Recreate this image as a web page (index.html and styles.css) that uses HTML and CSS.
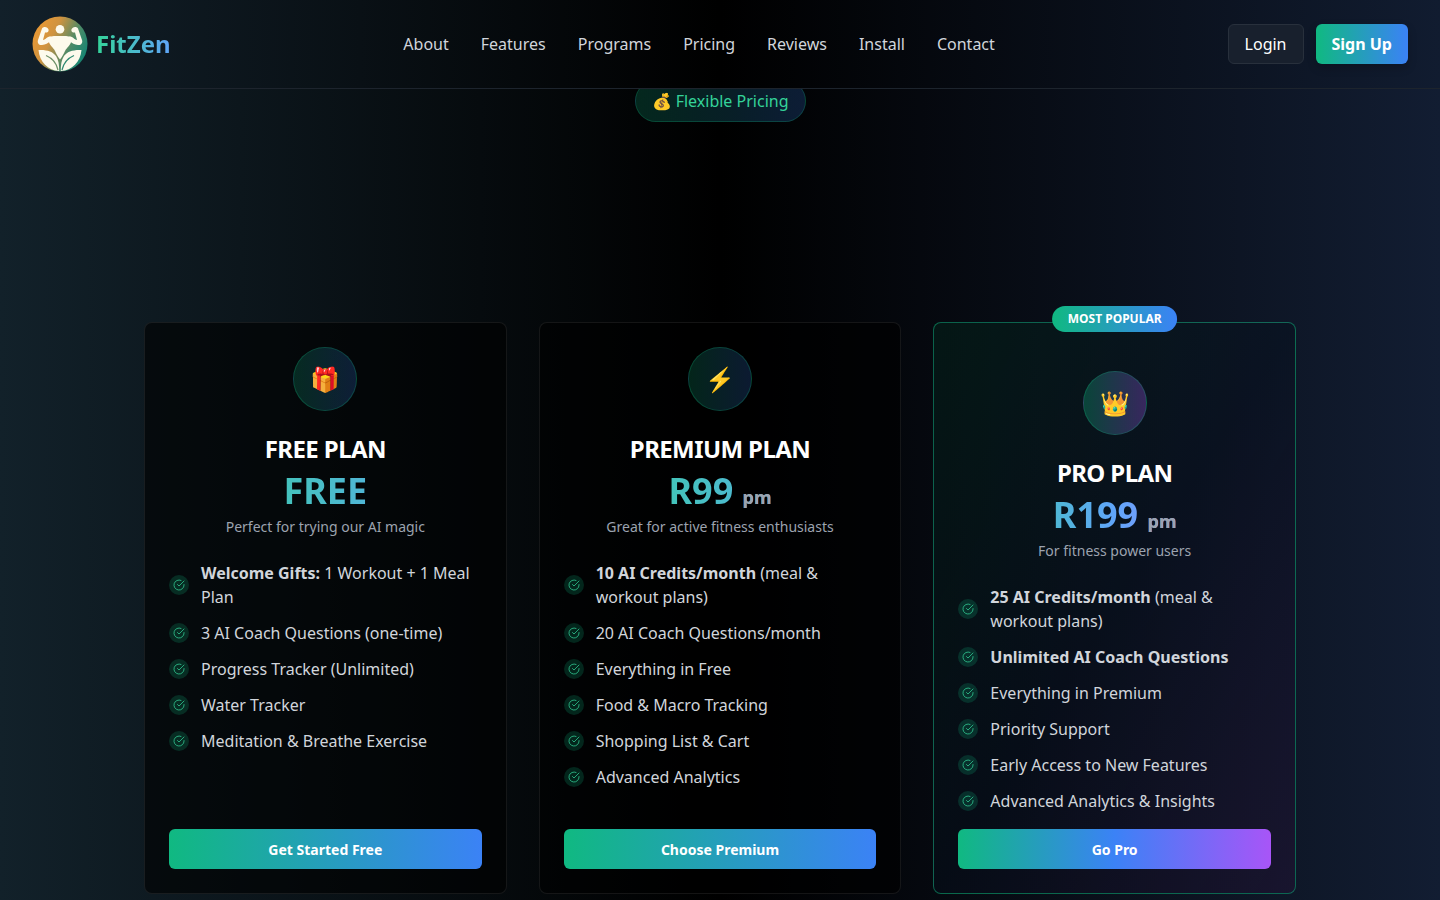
FILE: index.html
```
<!DOCTYPE html>
<html lang="en">
<head>
  <meta charset="UTF-8">
  <meta name="viewport" content="width=device-width, initial-scale=1">
  <title>FitZen - Pricing</title>
  <link rel="stylesheet" href="styles.css">
</head>
<body>
  <!-- shared icon -->
  <svg width="0" height="0" class="sprite" aria-hidden="true">
    <symbol id="check" viewBox="0 0 24 24">
      <path d="M22 11.08V12a10 10 0 1 1-5.93-9.14"/>
      <path d="m9 11 3 3L22 4"/>
    </symbol>
  </svg>

  <header class="header">
    <a href="#" class="brand">
      <svg class="logo" viewBox="0 0 56 56" aria-hidden="true">
        <defs>
          <linearGradient id="logoBg" x1="0" y1="0.2" x2="1" y2="0.7">
            <stop offset="0" stop-color="#ee9a32"/>
            <stop offset="0.35" stop-color="#cf9340"/>
            <stop offset="0.7" stop-color="#4a8a68"/>
            <stop offset="1" stop-color="#128574"/>
          </linearGradient>
        </defs>
        <circle cx="28" cy="28" r="27.5" fill="url(#logoBg)"/>
        <g fill="#fdfaec">
          <circle cx="28" cy="13.2" r="4.300"/>
          <!-- arms -->
          <path d="M15.500 12c-1.500-1.500-4.500-1.500-5.500.5L6 24c-1 3 1 5.500 4 5 3.500-.5 6-1.500 8.500-4.500l2-3-2.500-1c-3 0-4 3-7 3.500l2-7.500c1.500.3 3-.2 3.500-1.500.3-1.200 0-2.200-1-3z"/>
          <path d="M40.500 12c1.500-1.500 4.500-1.500 5.500.5L50 24c1 3-1 5.500-4 5-3.500-.5-6-1.500-8.500-4.500l-2-3 2.500-1c3 0 4 3 7 3.500l-2-7.500c-1.500.3-3-.2-3.500-1.500-.3-1.200 0-2.200 1-3z"/>
          <!-- torso -->
          <path d="M17.500 20.800c3-1 6-1 7.500-.8h6c1.500-.2 4.500-.2 7.500.8l1 3.700c-1 5-4.500 6.500-6.500 10.500-1.200 2.500-2.500 5.500-5 8.500-2.500-3-3.800-6-5-8.500-2-4-5.500-5.500-6.500-10.500z"/>
          <!-- leaves -->
          <path d="M6.500 34c8-.5 14.500 1.500 17.500 6 2.700 4 3.200 9 3.200 15C16 54.500 7.500 46 6.500 34z"/>
          <path d="M49.500 34c-8-.5-14.500 1.500-17.500 6-2.700 4-3.200 9-3.200 15C40 54.500 48.500 46 49.500 34z"/>
        </g>
        <g fill="none" stroke="#6d9068" stroke-width="1.200">
          <path d="M14 39.500c6 2.500 10.500 7.500 12 14.500"/>
          <path d="M42 39.500c-6 2.500-10.500 7.500-12 14.500" stroke="#2f8a72"/>
        </g>
      </svg>
      <span class="brand-name">FitZen</span>
    </a>
    <nav class="nav">
      <a href="#about">About</a>
      <a href="#features">Features</a>
      <a href="#programs">Programs</a>
      <a href="#pricing">Pricing</a>
      <a href="#reviews">Reviews</a>
      <a href="#install">Install</a>
      <a href="#contact">Contact</a>
    </nav>
    <div class="actions">
      <button class="btn-login">Login</button>
      <button class="btn-signup">Sign Up</button>
    </div>
  </header>

  <main class="pricing" id="pricing">
    <div class="intro">
      <span class="pill">💰 Flexible Pricing</span>
    </div>

    <div class="plans">
      <section class="card">
        <div class="icon">🎁</div>
        <h2>FREE PLAN</h2>
        <p class="price">FREE</p>
        <p class="desc">Perfect for trying our AI magic</p>
        <ul>
          <li><span class="tick"><svg><use href="#check"/></svg></span><span><b>Welcome Gifts:</b> 1 Workout + 1 Meal Plan</span></li>
          <li><span class="tick"><svg><use href="#check"/></svg></span><span>3 AI Coach Questions (one-time)</span></li>
          <li><span class="tick"><svg><use href="#check"/></svg></span><span>Progress Tracker (Unlimited)</span></li>
          <li><span class="tick"><svg><use href="#check"/></svg></span><span>Water Tracker</span></li>
          <li><span class="tick"><svg><use href="#check"/></svg></span><span>Meditation &amp; Breathe Exercise</span></li>
        </ul>
        <button class="btn-plan">Get Started Free</button>
      </section>

      <section class="card">
        <div class="icon">⚡</div>
        <h2>PREMIUM PLAN</h2>
        <p class="price">R99 <span class="per">pm</span></p>
        <p class="desc">Great for active fitness enthusiasts</p>
        <ul>
          <li><span class="tick"><svg><use href="#check"/></svg></span><span><b>10 AI Credits/month</b> (meal &amp; workout plans)</span></li>
          <li><span class="tick"><svg><use href="#check"/></svg></span><span>20 AI Coach Questions/month</span></li>
          <li><span class="tick"><svg><use href="#check"/></svg></span><span>Everything in Free</span></li>
          <li><span class="tick"><svg><use href="#check"/></svg></span><span>Food &amp; Macro Tracking</span></li>
          <li><span class="tick"><svg><use href="#check"/></svg></span><span>Shopping List &amp; Cart</span></li>
          <li><span class="tick"><svg><use href="#check"/></svg></span><span>Advanced Analytics</span></li>
        </ul>
        <button class="btn-plan">Choose Premium</button>
      </section>

      <section class="card pro">
        <span class="badge">MOST POPULAR</span>
        <div class="icon">👑</div>
        <h2>PRO PLAN</h2>
        <p class="price">R199 <span class="per">pm</span></p>
        <p class="desc">For fitness power users</p>
        <ul>
          <li><span class="tick"><svg><use href="#check"/></svg></span><span><b>25 AI Credits/month</b> (meal &amp; workout plans)</span></li>
          <li><span class="tick"><svg><use href="#check"/></svg></span><span><b>Unlimited AI Coach Questions</b></span></li>
          <li><span class="tick"><svg><use href="#check"/></svg></span><span>Everything in Premium</span></li>
          <li><span class="tick"><svg><use href="#check"/></svg></span><span>Priority Support</span></li>
          <li><span class="tick"><svg><use href="#check"/></svg></span><span>Early Access to New Features</span></li>
          <li><span class="tick"><svg><use href="#check"/></svg></span><span>Advanced Analytics &amp; Insights</span></li>
        </ul>
        <button class="btn-plan">Go Pro</button>
      </section>
    </div>
  </main>
</body>
</html>
```
FILE: styles.css
```
* {
  box-sizing: border-box;
  margin: 0;
  padding: 0;
}

body {
  min-height: 100vh;
  font-family: "Noto Sans", sans-serif;
  font-size: 16px;
  line-height: 24px;
  color: #d1d5db;
  background: linear-gradient(to right, #12212a, #000 50%, #121d32);
}

button {
  font-family: inherit;
  border: none;
  border-radius: 6px;
  color: #fff;
  cursor: pointer;
}

.sprite {
  position: absolute;
}

/* header */
.header {
  position: sticky;
  top: 0;
  z-index: 10;
  display: flex;
  justify-content: space-between;
  align-items: center;
  padding: 16px 32px;
  background: linear-gradient(to right, #12202a, #000 50%, #111c30);
  border-bottom: 1px solid #1d242d;
}

.brand {
  display: flex;
  align-items: center;
  gap: 8px;
  text-decoration: none;
}

.logo {
  width: 56px;
  height: 56px;
}

.brand-name {
  font-size: 24px;
  line-height: 32px;
  font-weight: 700;
  background: linear-gradient(to right, #34d399, #60a5fa);
  -webkit-background-clip: text;
  background-clip: text;
  color: transparent;
}

.nav {
  display: flex;
  gap: 32px;
}

.nav a {
  color: #d1d5db;
  text-decoration: none;
}

.nav a:hover {
  color: #34d399;
}

.actions {
  display: flex;
  gap: 12px;
}

.actions button {
  height: 40px;
  padding: 0 16px;
  font-size: 16px;
}

.actions .btn-login {
  background: #18202d;
  border: 1px solid #28303c;
}

.actions .btn-signup {
  font-weight: 700;
  background: linear-gradient(to right, #10b981, #3b82f6);
  box-shadow: 0 4px 10px rgba(0, 0, 0, 0.2);
}

/* pricing */
.pricing {
  padding: 0 32px 6px;
}

.intro {
  text-align: center;
  height: 233px;
}

.pill {
  display: inline-block;
  margin-top: -9px;
  padding: 8px 16px;
  border: 1px solid rgba(16, 185, 129, 0.25);
  border-radius: 24px;
  background: linear-gradient(to right, rgba(16, 185, 129, 0.2), rgba(59, 130, 246, 0.2));
  color: #34d399;
}

.plans {
  display: grid;
  grid-template-columns: repeat(3, 1fr);
  gap: 32px;
  max-width: 1152px;
  margin: 0 auto;
}

.card {
  position: relative;
  display: flex;
  flex-direction: column;
  padding: 24px;
  border: 1px solid rgba(255, 255, 255, 0.08);
  border-radius: 8px;
  background: rgba(0, 0, 0, 0.6);
  text-align: center;
}

.card.pro {
  padding-top: 48px;
  border-color: rgba(16, 185, 129, 0.5);
  background: linear-gradient(to bottom right, rgba(16, 185, 129, 0.1), rgba(59, 130, 246, 0.05), rgba(168, 85, 247, 0.1)), rgba(0, 0, 0, 0.4);
}

.badge {
  position: absolute;
  top: -17px;
  left: 50%;
  transform: translateX(-50%);
  padding: 5px 16px;
  border-radius: 13px;
  background: linear-gradient(to right, #10b981, #3b82f6);
  color: #fff;
  font-size: 12px;
  line-height: 16px;
  font-weight: 700;
  white-space: nowrap;
}

.icon {
  display: flex;
  align-items: center;
  justify-content: center;
  width: 64px;
  height: 64px;
  margin: 0 auto 24px;
  border: 1px solid rgba(16, 185, 129, 0.25);
  border-radius: 50%;
  background: linear-gradient(to right, rgba(16, 185, 129, 0.2), rgba(59, 130, 246, 0.2));
  font-size: 24px;
  line-height: 32px;
}

.pro .icon {
  background: linear-gradient(to right, rgba(16, 185, 129, 0.3), rgba(168, 85, 247, 0.3));
}

.card h2 {
  color: #fff;
  font-size: 24px;
  line-height: 28px;
  font-weight: 700;
  letter-spacing: -0.6px;
}

.price {
  margin-top: 8px;
  font-size: 36px;
  line-height: 40px;
  font-weight: 700;
  background: linear-gradient(to right, #34d399, #60a5fa);
  -webkit-background-clip: text;
  background-clip: text;
  color: transparent;
}

.pro .price {
  background-image: linear-gradient(to right, #34d399, #60a5fa, #c084fc);
}

.per {
  font-size: 18px;
  line-height: 24px;
  color: #9ca3af;
}

.desc {
  margin-top: 6px;
  font-size: 14px;
  line-height: 20px;
  color: #9ca3af;
}

.card ul {
  display: flex;
  flex-direction: column;
  flex: 1;
  gap: 12px;
  margin: 24px 0 16px;
  list-style: none;
  text-align: left;
}

.card li {
  display: flex;
  align-items: center;
  gap: 12px;
}

.card b {
  font-weight: 700;
}

.tick {
  display: flex;
  flex: none;
  align-items: center;
  justify-content: center;
  width: 20px;
  height: 20px;
  border-radius: 50%;
  background: rgba(16, 185, 129, 0.2);
}

.tick svg {
  width: 12px;
  height: 12px;
  fill: none;
  stroke: #34d399;
  stroke-width: 1.5;
  stroke-linecap: round;
  stroke-linejoin: round;
}

.btn-plan {
  height: 40px;
  font-size: 14px;
  font-weight: 700;
  background: linear-gradient(to right, #10b981, #3b82f6);
}

.pro .btn-plan {
  background: linear-gradient(to right, #10b981, #3b82f6, #a855f7);
}
```
